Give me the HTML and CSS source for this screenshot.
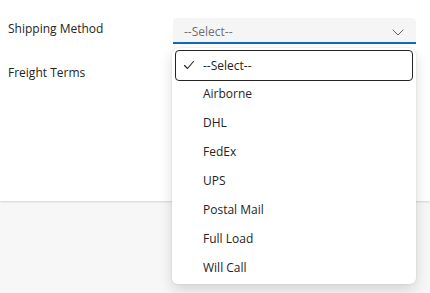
FILE: index.html
```html
<!DOCTYPE html>
<html lang="en">
<head>
    <meta charset="UTF-8">
    <meta name="viewport" content="width=device-width, initial-scale=1.0">
    <title>Shipping</title>
    <link rel="stylesheet" href="styles.css">
</head>
<body>
    <div class="page">
        <div class="card">
            <div class="form-row">
                <label class="field-label">Shipping Method</label>
                <div class="select open">
                    <span class="select-value">--Select--</span>
                    <svg class="chevron" width="12" height="12" viewBox="0 0 12 12">
                        <path d="M1 4l5 5 5-5" fill="none" stroke="#616161" stroke-width="1" stroke-linecap="round" stroke-linejoin="round"/>
                    </svg>
                </div>
            </div>
            <div class="form-row">
                <label class="field-label">Freight Terms</label>
                <!-- covered by the open dropdown -->
                <div class="select"></div>
            </div>
        </div>

        <!-- open dropdown for Shipping Method -->
        <div class="listbox">
            <div class="option selected">
                <svg class="check" width="12" height="12" viewBox="0 0 12 12">
                    <path d="M1.5 6.5l3 3 6-7" fill="none" stroke="#242424" stroke-width="1.1" stroke-linecap="round" stroke-linejoin="round"/>
                </svg>
                <span>--Select--</span>
            </div>
            <div class="option"><span>Airborne</span></div>
            <div class="option"><span>DHL</span></div>
            <div class="option"><span>FedEx</span></div>
            <div class="option"><span>UPS</span></div>
            <div class="option"><span>Postal Mail</span></div>
            <div class="option"><span>Full Load</span></div>
            <div class="option"><span>Will Call</span></div>
        </div>
    </div>
</body>
</html>
```

FILE: styles.css
```css
html, body {
    margin: 0;
    height: 100%;
    background: #f7f7f7;
}
body {
    font-family: "Open Sans", "Noto Sans", Arial, sans-serif;
    font-size: 12px;
    color: #242424;
}
.page {
    position: relative;
    min-height: 100%;
}
.card {
    background: #fff;
    height: 201px;
    padding: 18px 14px 0 8px;
    box-sizing: border-box;
    box-shadow: 0 1px 2px rgba(0,0,0,0.14);
}
.form-row {
    display: grid;
    grid-template-columns: 165px 1fr;
    align-items: start;
    margin-bottom: 18px;
}
.field-label {
    line-height: 20px;
    padding-top: 1px;
}
.select {
    height: 26px;
    display: flex;
    align-items: center;
    justify-content: space-between;
    padding: 0 12px 0 11px;
    background: #f5f5f5;
    border-radius: 4px 4px 0 0;
    border-bottom: 1px solid #616161;
    box-sizing: border-box;
}
.select.open {
    border-bottom: 2px solid #0f6cbd;
}
.select-value {
    color: #707070;
    padding-top: 3px;
}
.chevron {
    margin-top: 3px;
}
.listbox {
    position: absolute;
    z-index: 10;
    top: 48px;
    left: 172px;
    width: 244px;
    padding: 2px 3px;
    box-sizing: border-box;
    background: #fff;
    border-radius: 6px;
    box-shadow: 0 0 2px rgba(0,0,0,0.12), 0 6px 14px rgba(0,0,0,0.14);
}
.option {
    height: 29px;
    display: flex;
    align-items: center;
    padding-left: 27px;
    box-sizing: border-box;
    border: 1px solid transparent;
    border-radius: 4px;
    position: relative;
}
.option.selected {
    border-color: #242424;
    height: 31px;
    margin-bottom: -2px;
}
.check {
    position: absolute;
    left: 7px;
    top: 8px;
}
```
